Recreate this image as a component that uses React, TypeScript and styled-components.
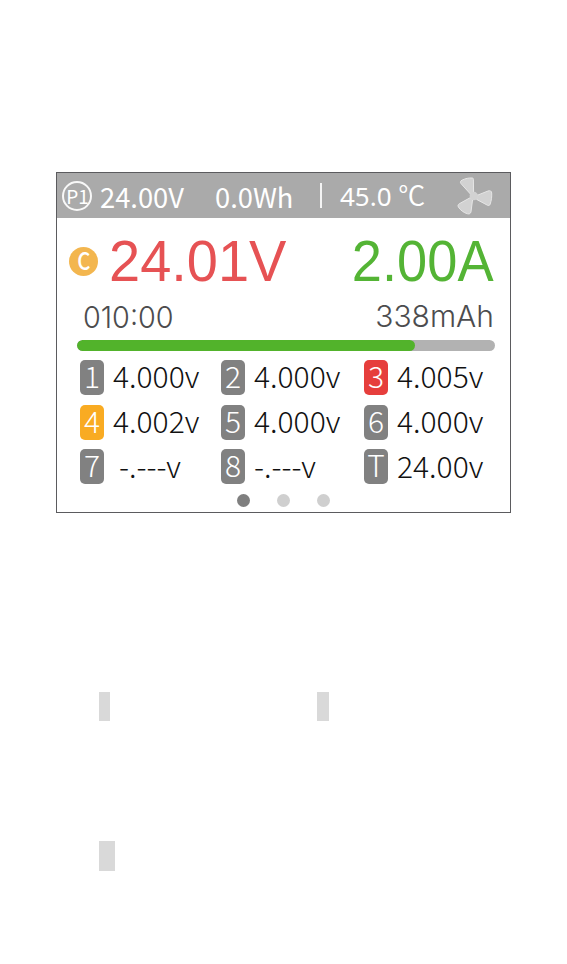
import React from 'react';
import styled, { createGlobalStyle } from 'styled-components';

const cjk = `'Noto Sans CJK SC', sans-serif`;
const arial = `'Liberation Sans', Arial, sans-serif`;
const inter = `'Inter', sans-serif`;

const cells = [
    { id: '1', value: '4.000v' },
    { id: '2', value: '4.000v' },
    { id: '3', value: '4.005v', color: '#e63e3c' },
    { id: '4', value: '4.002v', color: '#f9ab22' },
    { id: '5', value: '4.000v' },
    { id: '6', value: '4.000v' },
    { id: '7', value: '-.---v', indent: 6, low: true },
    { id: '8', value: '-.---v', low: true },
    { id: 'T', value: '24.00v', low: true },
];

const FanIcon = () => (
    <Fan viewBox="0 0 36 38">
        <g fill="#d2d2d2" stroke="#e6e6e6" strokeWidth="1" strokeLinejoin="round">
            <path d="M13.4 17 L4 6.6 C3 5.4 3.2 4 5 3.2 C8.4 1.4 12 .8 15 1 C16 1 16.4 1.4 16.4 2.4 L16.6 16 Z" />
            <path d="M20 18.4 L31 14 C33.4 13.2 34.6 14.2 34.7 16 C34.9 20 34.4 23.6 33.2 27 C32.6 28.8 31.6 28.8 30.4 28.2 L19.6 22.4 Z" />
            <path d="M15.6 22.4 L14 34.8 C13.6 36.6 12.4 37.2 10.6 36.8 C6.8 35.8 3.4 33.2 1.4 30 C.6 28.6 1 27.6 2.2 26.8 L13 20.8 Z" />
            <circle cx="16.8" cy="19" r="4.2" stroke="none" />
        </g>
    </Fan>
);

export default function App() {
    return (
        <Page>
            <GlobalStyle />
            <Screen>
                <TopBar>
                    <Profile><span>P1</span></Profile>
                    <TopText $width={115}>24.00V</TopText>
                    <TopText $width={105}>0.0Wh</TopText>
                    <Divider />
                    <Temp>45.0 <Unit>℃</Unit></Temp>
                    <FanIcon />
                </TopBar>
                <Output>
                    <Mode><Letter>C</Letter></Mode>
                    <Big $color="#e65254" $scale={0.965}>24.01V</Big>
                    <Big $color="#54b435" $scale={0.935} $right>2.00A</Big>
                </Output>
                <Stats>
                    <Stat $scale={0.96}>010:00</Stat>
                    <Stat $scale={1} $raised>338mAh</Stat>
                </Stats>
                <Track><Fill style={{ width: `${(338 / 418) * 100}%` }} /></Track>
                <Cells>
                    {cells.map((cell) => (
                        <Cell key={cell.id}>
                            <Badge $color={cell.color}>{cell.id}</Badge>
                            <Value $indent={cell.indent} $low={cell.low}>{cell.value}</Value>
                        </Cell>
                    ))}
                </Cells>
                <Dots>
                    <Dot $active />
                    <Dot />
                    <Dot />
                </Dots>
            </Screen>
            <Marks>
                <Mark $width={11} $height={29} />
                <Mark $width={12} $height={29} />
            </Marks>
            <Marks $second>
                <Mark $width={16} $height={30} />
            </Marks>
        </Page>
    );
}

const GlobalStyle = createGlobalStyle`
body{
margin:0;
background-color:#fff;
}
*{
box-sizing:border-box;
}
`

const Page = styled.div`
width:567px;
height:964px;
padding:172px 56px 0;
overflow:hidden;
background-color:#fff;
`

const Screen = styled.section`
width:455px;
height:341px;
border:1px solid #5b5b5e;
white-space:pre;
`

const TopBar = styled.header`
display:flex;
align-items:center;
height:45px;
padding-left:5px;
background-color:#aaaaaa;
color:#fff;
`

const Profile = styled.div`
display:flex;
align-items:center;
justify-content:center;
flex:none;
width:30px;
height:30px;
margin-right:8px;
padding:0 0 1px 1px;
border:2px solid #f8f8f8;
border-radius:50%;
font-family:${cjk};
font-size:19px;
font-weight:400;
line-height:25px;
`

const TopText = styled.span<{ $width: number }>`
flex:none;
width:${({ $width }) => $width}px;
padding-top:1px;
font-family:${cjk};
font-size:27.3px;
line-height:42px;
`

const Divider = styled.span`
flex:none;
width:2px;
height:25px;
margin-right:18px;
background-color:#f4f4f4;
`

const Temp = styled.span`
flex:none;
width:117px;
font-family:'Noto Sans', sans-serif;
font-size:26px;
line-height:42px;
`

const Unit = styled.span`
font-family:${cjk};
font-size:27px;
font-weight:350;
`

const Fan = styled.svg`
flex:none;
width:36px;
height:38px;
`

const Output = styled.div`
display:flex;
align-items:center;
height:86px;
padding-left:12px;
`

const Mode = styled.div`
display:flex;
align-items:center;
justify-content:center;
flex:none;
width:29px;
height:29px;
margin-right:11px;
padding-bottom:2px;
border-radius:50%;
background-color:#f3b64f;
color:#fff;
font-family:${cjk};
font-size:24px;
font-weight:500;
line-height:26px;
`

const Letter = styled.span`
transform:scaleX(0.85);
`

const Big = styled.span<{ $color: string; $scale: number; $right?: boolean }>`
margin-left:${({ $right }) => $right ? 'auto' : 0};
margin-right:${({ $right }) => $right ? '16px' : 0};
color:${({ $color }) => $color};
font-family:${arial};
font-size:58px;
line-height:64px;
transform:scaleX(${({ $scale }) => $scale});
transform-origin:${({ $right }) => $right ? 'right' : 'left'};
`

const Stats = styled.div`
display:flex;
justify-content:space-between;
height:36px;
padding:0 16px 0 26px;
`

const Stat = styled.span<{ $scale: number; $raised?: boolean }>`
margin-top:${({ $raised }) => $raised ? -6 : -5}px;
color:#4c4c4e;
font-family:${inter};
font-size:30px;
font-weight:300;
line-height:36px;
transform:scaleX(${({ $scale }) => $scale});
transform-origin:left;
`

const Track = styled.div`
width:418px;
height:11px;
margin-left:20px;
border-radius:6px;
background-color:#b2b2b2;
overflow:hidden;
`

const Fill = styled.div`
height:100%;
border-radius:6px;
background-color:#52b32b;
`

const Cells = styled.div`
display:grid;
grid-template-columns:141px 143px 130px;
grid-auto-rows:35px;
row-gap:9.5px;
padding:9px 0 0 23px;
`

const Cell = styled.div`
display:flex;
align-items:center;
`

const Badge = styled.span<{ $color?: string }>`
flex:none;
width:24px;
height:35px;
border-radius:5px;
background-color:${({ $color }) => $color || '#818181'};
color:#fff;
font-family:${cjk};
font-size:30px;
font-weight:300;
line-height:31px;
text-align:center;
`

const Value = styled.span<{ $indent?: number; $low?: boolean }>`
height:35px;
margin-left:${({ $indent = 0 }) => 9 + $indent}px;
color:#111;
font-family:${cjk};
font-size:30px;
font-weight:300;
line-height:${({ $low }) => $low ? 33 : 31}px;
`

const Dots = styled.div`
display:flex;
gap:27px;
padding:10px 0 0 180px;
`

const Dot = styled.span<{ $active?: boolean }>`
width:13px;
height:13px;
border-radius:50%;
background-color:${({ $active }) => $active ? '#7f7f7f' : '#cfcfcf'};
`

const Marks = styled.div<{ $second?: boolean }>`
display:flex;
gap:207px;
margin-top:${({ $second }) => $second ? 120 : 179}px;
padding-left:43px;
`

const Mark = styled.span<{ $width: number; $height: number }>`
width:${({ $width }) => $width}px;
height:${({ $height }) => $height}px;
background-color:#d9d9d9;
`
